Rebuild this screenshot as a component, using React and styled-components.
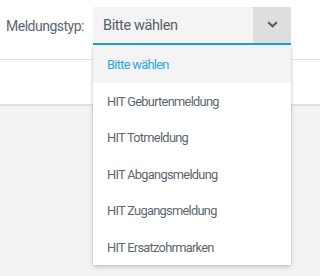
import React from "react";
import styled, { createGlobalStyle } from "styled-components";

const GlobalStyle = createGlobalStyle`
  html, body {
    margin: 0;
    padding: 0;
    background: #f3f3f3;
    font-family: Roboto, "Liberation Sans", sans-serif;
  }
`;

const Page = styled.div`
  display: flex;
  flex-direction: column;
  min-height: 276px;
`;

const Header = styled.div`
  background: #ffffff;
  height: 60px;
  box-sizing: border-box;
  border-bottom: 1px solid #e4e4e4;
  padding: 7px 0 0 6px;
  display: flex;
  align-items: flex-start;
`;

const SubBar = styled.div`
  background: #ffffff;
  height: 44px;
  border-bottom: 2px solid #dcdfe3;
`;

const Label = styled.label`
  width: 87px;
  line-height: 38px;
  font-size: 14px;
  letter-spacing: -0.5px;
  color: #5b6570;
`;

const SelectWrap = styled.div`
  position: relative;
  width: 198px;
`;

const SelectBox = styled.div`
  display: flex;
  height: 38px;
  box-sizing: border-box;
  background: #f4f4f4;
  border-bottom: 2px solid #1e9be0;
`;

const SelectValue = styled.div`
  flex: 1;
  padding-left: 10px;
  line-height: 37px;
  font-size: 14.5px;
  letter-spacing: -0.4px;
  color: #56616b;
`;

const Toggle = styled.div`
  width: 38px;
  background: #dedede;
  display: flex;
  align-items: center;
  justify-content: center;
  padding-bottom: 1px;
`;

const Menu = styled.ul`
  position: absolute;
  top: 39px;
  left: 0;
  right: 0;
  margin: 0;
  padding: 0;
  list-style: none;
  background: #ffffff;
  box-shadow: 0 2px 4px rgba(0, 0, 0, 0.18), 0 0 2px rgba(0, 0, 0, 0.12);
`;

const Item = styled.li`
  height: 36.5px;
  line-height: 38px;
  padding-left: 14px;
  font-size: 12.8px;
  letter-spacing: -0.7px;
  color: ${(p) => (p.$active ? "#2aa8e2" : "#5d6770")};
  background: ${(p) => (p.$active ? "#f4f4f4" : "#ffffff")};
`;

const options = [
  "Bitte wählen",
  "HIT Geburtenmeldung",
  "HIT Totmeldung",
  "HIT Abgangsmeldung",
  "HIT Zugangsmeldung",
  "HIT Ersatzohrmarken",
];

export default function App() {
  return (
    <>
      <GlobalStyle />
      <Page>
        <Header>
          <Label>Meldungstyp:</Label>
          <SelectWrap>
            <SelectBox>
              <SelectValue>Bitte wählen</SelectValue>
              <Toggle>
                <svg width="11" height="7" viewBox="0 0 11 7">
                  <path
                    d="M1.2 1.2 L5.5 5.3 L9.8 1.2"
                    fill="none"
                    stroke="#4a5b68"
                    strokeWidth="2"
                  />
                </svg>
              </Toggle>
            </SelectBox>
            <Menu>
              {options.map((o, i) => (
                <Item key={o} $active={i === 0}>
                  {o}
                </Item>
              ))}
            </Menu>
          </SelectWrap>
        </Header>
        <SubBar />
      </Page>
    </>
  );
}
